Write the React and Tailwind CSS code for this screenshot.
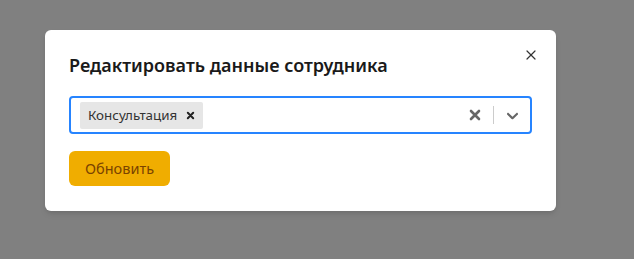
import { X } from 'lucide-react';

function TagSelect() {
  return (
    <div className="flex h-[38px] w-full items-center rounded-[4px] border-2 border-[#2684ff] bg-white pl-[9px]">
      <div className="flex flex-1 items-center">
        <div className="flex h-[27px] items-center rounded-[2px] bg-[#e6e6e6] pl-2 pr-[5px]">
          <span className="text-[13.4px] text-[#333]">Консультация</span>
          <span className="ml-[5px] flex h-4 w-4 items-center justify-center">
            <svg width="9" height="9" viewBox="0 0 10 10" fill="none" stroke="#222" strokeWidth="2.2" strokeLinecap="round">
              <path d="M2 2 L8 8 M8 2 L2 8" />
            </svg>
          </span>
        </div>
      </div>
      <div className="flex items-center">
        <span className="flex w-[36px] items-center justify-center">
          <svg width="12" height="12" viewBox="0 0 12 12" fill="none" stroke="#666" strokeWidth="2.6" strokeLinecap="round">
            <path d="M2 2 L10 10 M10 2 L2 10" />
          </svg>
        </span>
        <span className="h-[18px] w-px bg-[#ccc]" />
        <span className="flex w-[36px] items-center justify-center">
          <svg width="19" height="19" viewBox="0 0 20 20" fill="#666">
            <path d="M4.516 7.548c0.436-0.446 1.043-0.481 1.576 0l3.908 3.747 3.908-3.747c0.533-0.481 1.141-0.446 1.574 0 0.436 0.445 0.408 1.197 0 1.615-0.406 0.418-4.695 4.502-4.695 4.502-0.217 0.223-0.502 0.335-0.787 0.335s-0.57-0.112-0.789-0.335c0 0-4.287-4.084-4.695-4.502s-0.436-1.17 0-1.615z" />
          </svg>
        </span>
      </div>
    </div>
  );
}

export default function App() {
  return (
    <div
      className="flex h-[259px] w-full items-start bg-[#808080] pl-[45px] pt-[30px]"
      style={{ fontFamily: '"Noto Sans", "Open Sans", sans-serif' }}
    >
      <div className="relative flex w-[511px] flex-col rounded-[6px] bg-white px-6 pb-[25px] pt-[54px] shadow-md">
        <button type="button" className="absolute right-[17px] top-[17px] text-[#333]">
          <X size={16} strokeWidth={1.8} />
        </button>
        <h2 className="absolute left-6 top-[20px] text-[18px] font-semibold leading-[30px] text-[#1a1a1a]">
          Редактировать данные сотрудника
        </h2>
        <div className="mt-[12px]">
          <TagSelect />
        </div>
        <div className="mt-[17px]">
          <button
            type="button"
            className="h-[35px] rounded-[6px] bg-[#f0ad00] px-4 text-[14.5px] text-[#7a4300]"
          >
            Обновить
          </button>
        </div>
      </div>
    </div>
  );
}
